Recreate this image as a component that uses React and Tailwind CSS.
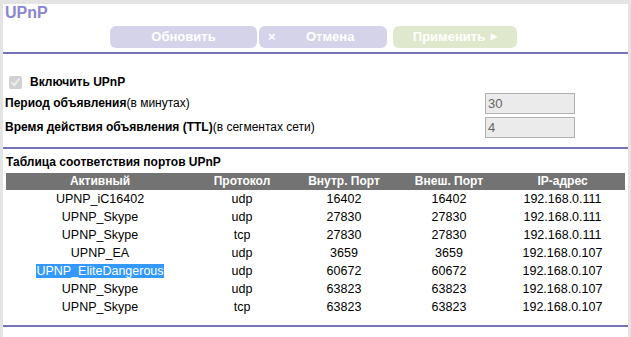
import React from "react";

const rows = [
  ["UPNP_iC16402", "udp", "16402", "16402", "192.168.0.111"],
  ["UPNP_Skype", "udp", "27830", "27830", "192.168.0.111"],
  ["UPNP_Skype", "tcp", "27830", "27830", "192.168.0.111"],
  ["UPNP_EA", "udp", "3659", "3659", "192.168.0.107"],
  ["UPNP_EliteDangerous", "udp", "60672", "60672", "192.168.0.107"],
  ["UPNP_Skype", "udp", "63823", "63823", "192.168.0.107"],
  ["UPNP_Skype", "tcp", "63823", "63823", "192.168.0.107"],
];

const Line = () => <div className="h-[2px] bg-[#7673bb]" />;

export default function App() {
  return (
    <div
      className="w-[631px] h-[337px] bg-[#e4e4e4] pt-[4px] pl-[3px] pr-[3px] overflow-hidden"
      style={{ fontFamily: '"Liberation Sans", Arial, sans-serif' }}
    >
      <div className="h-full bg-white">
        <div className="h-[22px] pl-[2px] text-[16px] font-bold leading-[18px] text-[#8b86d2]">UPnP</div>

        {/* buttons */}
        <div className="flex h-[22px] pl-[107px] text-[13px] font-bold text-white">
          <div className="w-[147px] rounded-[6px] bg-[#d4d3ea] flex items-center justify-center">Обновить</div>
          <div className="ml-[2px] w-[128px] rounded-[6px] bg-[#d4d3ea] flex items-center">
            <span className="pl-[9px] w-[47px]">×</span>
            <span>Отмена</span>
          </div>
          <div className="ml-[6px] w-[124px] rounded-[6px] bg-[#dfe8cc] flex items-center justify-center gap-[6px]">
            <span>Применить</span>
            <span className="text-[8px]">▶</span>
          </div>
        </div>

        <div className="mt-[4px]">
          <Line />
        </div>

        {/* settings */}
        <div className="pt-[20px] text-[12px] text-black">
          <div className="flex items-center h-[16px]">
            <input
              type="checkbox"
              checked
              disabled
              readOnly
              className="ml-[6px] w-[13px] h-[13px] accent-[#9a9a9a]"
            />
            <span className="ml-[8px] font-bold">Включить UPnP</span>
          </div>
          <div className="flex items-center h-[22px] mt-[2px]">
            <span className="w-[482px] pl-[2px]">
              <span className="font-bold">Период объявления</span>(в минутах)
            </span>
            <div className="w-[90px] h-[21px] border border-[#b0b0b0] bg-[#ebebeb] text-[13px] text-[#666] pl-[2px] leading-[19px]">30</div>
          </div>
          <div className="flex items-center h-[22px] mt-[2px]">
            <span className="w-[482px] pl-[2px]">
              <span className="font-bold">Время действия объявления (TTL)</span>(в сегментах сети)
            </span>
            <div className="w-[90px] h-[21px] border border-[#b0b0b0] bg-[#ebebeb] text-[13px] text-[#666] pl-[2px] leading-[19px]">4</div>
          </div>
        </div>

        <div className="mt-[9px]">
          <Line />
        </div>

        {/* table */}
        <div className="pt-[6px] pl-[3px] text-[12px] font-bold text-black leading-[14px]">Таблица соответствия портов UPnP</div>
        <table className="mt-[4px] ml-[3px] w-[619px] border-collapse text-[12.5px] leading-[15px] text-black" style={{ tableLayout: "fixed" }}>
          <colgroup>
            <col className="w-[188px]" />
            <col className="w-[96px]" />
            <col className="w-[108px]" />
            <col className="w-[102px]" />
            <col className="w-[125px]" />
          </colgroup>
          <thead>
            <tr className="bg-[#737373] text-white h-[17px] text-[12px]">
              <th className="font-bold text-center p-0">Активный</th>
              <th className="font-bold text-center p-0">Протокол</th>
              <th className="font-bold text-center p-0">Внутр. Порт</th>
              <th className="font-bold text-center p-0">Внеш. Порт</th>
              <th className="font-bold text-center p-0">IP-адрес</th>
            </tr>
          </thead>
          <tbody>
            {rows.map((r, i) => (
              <tr key={i} className="h-[18px]">
                <td className="text-center p-0">
                  {i === 4 ? <span className="bg-[#3399ff] text-white">{r[0]}</span> : r[0]}
                </td>
                <td className="text-center p-0">{r[1]}</td>
                <td className="text-center p-0">{r[2]}</td>
                <td className="text-center p-0">{r[3]}</td>
                <td className="text-center p-0">{r[4]}</td>
              </tr>
            ))}
          </tbody>
        </table>

        <div className="mt-[9px]">
          <Line />
        </div>
      </div>
    </div>
  );
}
